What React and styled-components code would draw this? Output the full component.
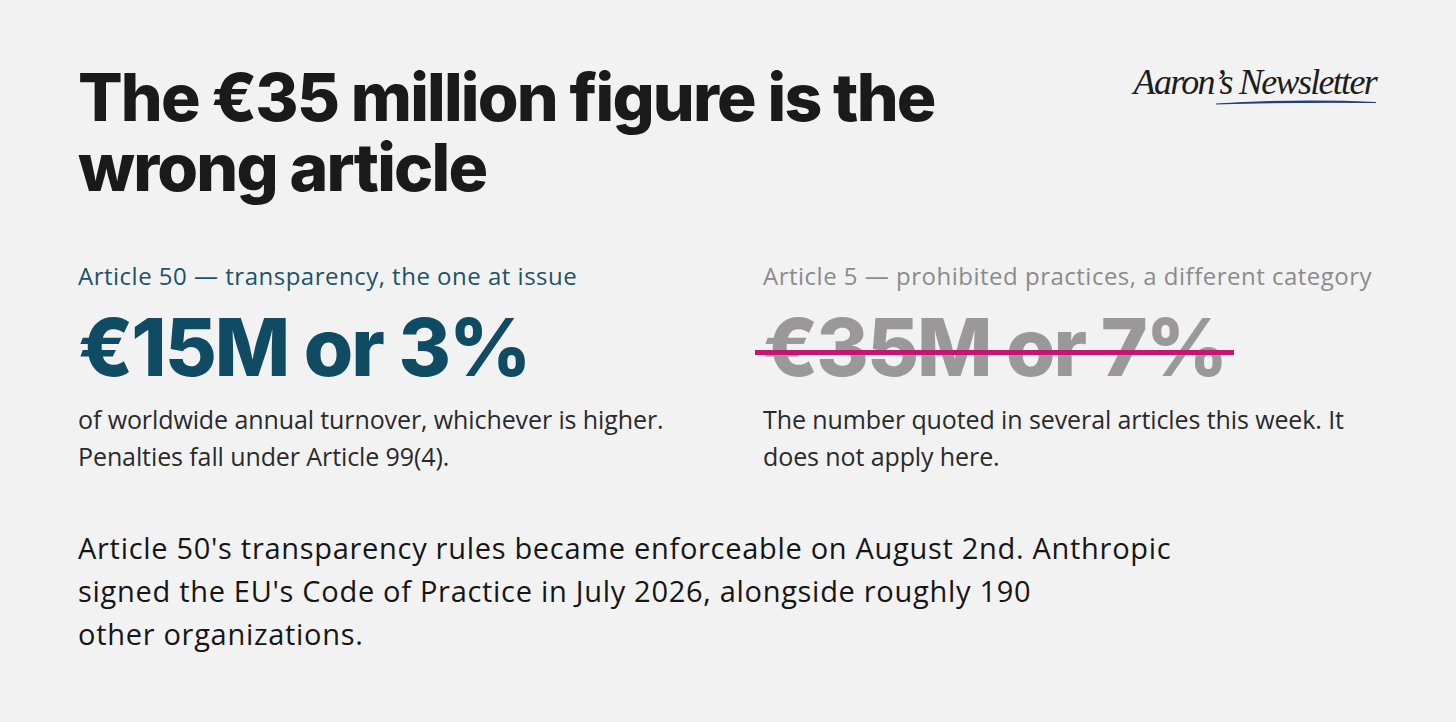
import React from "react";
import styled, { createGlobalStyle } from "styled-components";

const GlobalStyle = createGlobalStyle`
    html, body {
        margin: 0;
        padding: 0;
        background: #f2f2f2;
    }
    body {
        font-family: "Open Sans", "Liberation Sans", sans-serif;
        color: #1c1c1c;
    }
`;

const Page = styled.div`
    width: 1456px;
    height: 722px;
    box-sizing: border-box;
    padding: 62px 78px 0 78px;
    background: #f2f2f2;
    overflow: hidden;
`;

const Header = styled.header`
    display: flex;
    justify-content: space-between;
    align-items: flex-start;
`;

const Headline = styled.h1`
    margin: 0;
    width: 920px;
    font-family: "Inter", sans-serif;
    font-weight: 800;
    font-size: 66px;
    line-height: 70px;
    letter-spacing: -1.8px;
    color: #1a1a1a;
`;

const Logo = styled.div`
    display: flex;
    flex-direction: column;
    align-items: flex-end;
    margin-top: 2px;
    margin-right: 2px;
`;

const LogoText = styled.span`
    font-family: "Liberation Serif", serif;
    font-style: italic;
    font-size: 36px;
    letter-spacing: -1.7px;
    line-height: 36px;
    color: #1d1d1d;
`;

const Columns = styled.div`
    display: grid;
    grid-template-columns: 685px 1fr;
    margin-top: 58px;
`;

const Column = styled.section`
    display: flex;
    flex-direction: column;
`;

const Label = styled.div`
    font-size: 24px;
    line-height: 32px;
    letter-spacing: 0.5px;
    color: ${(p) => (p.$muted ? "#8b8b8b" : "#1d5268")};
`;

const Figure = styled.div`
    position: relative;
    align-self: flex-start;
    margin-top: 10px;
    font-family: "Inter", sans-serif;
    font-weight: 800;
    font-size: 80px;
    line-height: 90px;
    letter-spacing: -2px;
    color: ${(p) => (p.$muted ? "#9a9898" : "#0f4c63")};
`;

const Strike = styled.span`
    position: absolute;
    left: -8px;
    right: -8px;
    top: 48px;
    height: 5px;
    background: #c2166f;
`;

const Note = styled.p`
    margin: 9px 0 0 0;
    font-size: 25px;
    line-height: 37px;
    letter-spacing: -0.1px;
    color: #2a2a2a;
    max-width: 610px;
`;

const Body = styled.p`
    margin: 51px 0 0 0;
    font-size: 29px;
    line-height: 43px;
    letter-spacing: 0.7px;
    color: #161616;
`;

const Swoosh = () => (
    <svg width="160" height="8" viewBox="0 0 160 8" style={{ marginTop: -1 }}>
        <path d="M0 5 Q80 0 160 3.5 Q80 2.5 0 5 Z" fill="#1f3f7c" stroke="#1f3f7c" strokeWidth="1.2" />
    </svg>
);

export default function App() {
    return (
        <>
            <GlobalStyle />
            <Page>
                <Header>
                    <Headline>The €35 million figure is the wrong article</Headline>
                    <Logo>
                        <LogoText>Aaron’s Newsletter</LogoText>
                        <Swoosh />
                    </Logo>
                </Header>
                <Columns>
                    <Column>
                        <Label>Article 50 — transparency, the one at issue</Label>
                        <Figure>€15M or 3%</Figure>
                        <Note>
                            of worldwide annual turnover, whichever is higher. Penalties fall under Article 99(4).
                        </Note>
                    </Column>
                    <Column>
                        <Label $muted>Article 5 — prohibited practices, a different category</Label>
                        <Figure $muted>
                            €35M or 7%
                            <Strike />
                        </Figure>
                        <Note>The number quoted in several articles this week. It does not apply here.</Note>
                    </Column>
                </Columns>
                <Body>
                    Article 50's transparency rules became enforceable on August 2nd. Anthropic
                    <br />
                    signed the EU's Code of Practice in July 2026, alongside roughly 190
                    <br />
                    other organizations.
                </Body>
            </Page>
        </>
    );
}
